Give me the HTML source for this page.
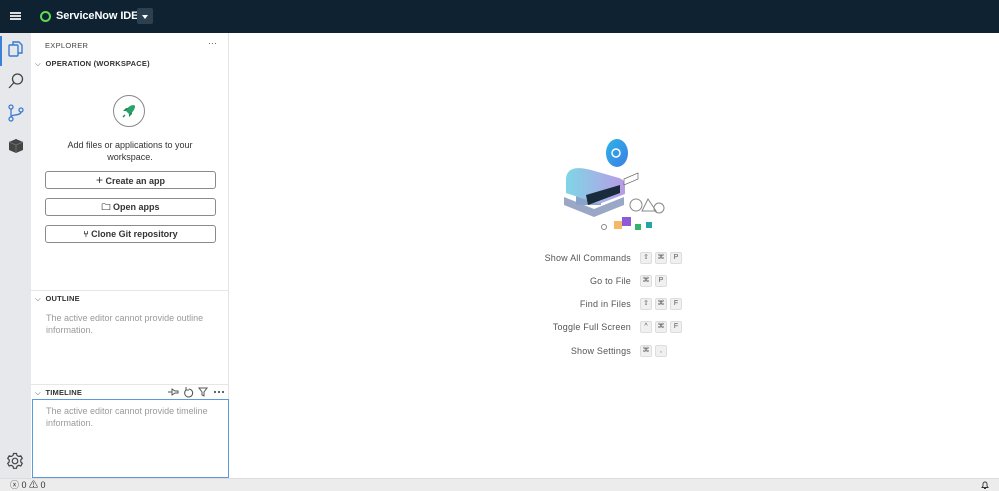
<!DOCTYPE html>
<html><head><meta charset="utf-8"><style>
*{box-sizing:border-box;margin:0;padding:0}
body{width:999px;height:491px;overflow:hidden;font-family:"Liberation Sans",sans-serif;background:#fff;position:relative;color:#333}
.top{position:absolute;left:0;top:0;width:999px;height:33px;background:#0e2232}
.act{position:absolute;left:0;top:33px;width:31px;height:445px;background:#e6e8eb}
.side{position:absolute;left:31px;top:33px;width:198px;height:445px;background:#fff;border-right:1px solid #e3e3e3}
.status{position:absolute;left:0;top:478px;width:999px;height:13px;background:#ececec;border-top:1px solid #ddd;font-size:9px;color:#333}
.abs{position:absolute}
.hdr{font-size:7.5px;font-weight:bold;color:#333;letter-spacing:.2px}
.btn{position:absolute;left:14px;width:171px;height:18px;border:1px solid #8a8a8a;border-radius:3px;font-size:9px;font-weight:bold;color:#333;text-align:center;line-height:16px}
.muted{font-size:9px;color:#9a9a9a;line-height:11.5px}
.row{position:absolute;right:368px;font-size:9px;color:#555;letter-spacing:.2px;white-space:nowrap;width:200px;height:14px}
.row span.t{position:absolute;right:0;top:1px}
.keys{position:absolute;left:640px;white-space:nowrap}
.k{display:inline-block;height:12px;width:12px;background:#f0f0f0;border:1px solid #ddd;border-radius:2px;font-size:7px;line-height:10px;text-align:center;color:#555;margin-right:3px;vertical-align:top}
</style></head><body>
<div class="top">
  <div class="abs" style="left:10px;top:12px;width:11px;height:1.5px;background:#ddd;box-shadow:0 3px 0 #ddd,0 6px 0 #ddd"></div>
  <div class="abs" style="left:40px;top:11px;width:11px;height:11px;border:2.5px solid #62d84e;border-radius:50%"></div>
  <div class="abs" style="left:56px;top:10px;font-size:11px;font-weight:bold;color:#fff;letter-spacing:-.1px">ServiceNow IDE</div>
  <div class="abs" style="left:137px;top:8px;width:16px;height:16px;background:#2d4050;border-radius:2px"></div>
  <div class="abs" style="left:142px;top:15px;width:0;height:0;border-left:3px solid transparent;border-right:3px solid transparent;border-top:4px solid #fff"></div>
</div>
<div class="act">
  <div class="abs" style="left:0;top:3px;width:2px;height:30px;background:#3b82d6"></div>
  <svg class="abs" style="left:7px;top:7px" width="18" height="18" viewBox="0 0 18 18" fill="none" stroke="#3a7bd0" stroke-width="1.4"><rect x="2" y="5" width="9" height="11" rx="1"/><path d="M6 5V2h6l3 3v8h-4"/></svg>
  <svg class="abs" style="left:7px;top:39px" width="18" height="18" viewBox="0 0 18 18" fill="none" stroke="#444" stroke-width="1.3"><circle cx="10.5" cy="7" r="5"/><path d="M7 10.5L2 16"/></svg>
  <svg class="abs" style="left:7px;top:71px" width="18" height="18" viewBox="0 0 18 18" fill="none" stroke="#3a7bd0" stroke-width="1.3"><circle cx="4" cy="3" r="2"/><circle cx="4" cy="15" r="2"/><circle cx="14" cy="6" r="2"/><path d="M4 5v8M14 8c0 4-10 2-10 5"/></svg>
  <svg class="abs" style="left:7px;top:103px" width="18" height="18" viewBox="0 0 18 18"><path d="M2 6l7-3 7 3v8l-7 3-7-3z" fill="#444"/><path d="M2 6l7 3 7-3M9 9v8" stroke="#777" stroke-width=".8" fill="none"/></svg>
  <svg class="abs" style="left:6px;top:419px" width="18" height="18" viewBox="0 0 18 18" fill="none" stroke="#444" stroke-width="1.2"><circle cx="9" cy="9" r="2.8"/><path d="M7.5 1.5h3l.5 2 1.8 1 2-.7 1.5 2.6-1.5 1.4v2.2l1.5 1.4-1.5 2.6-2-.7-1.8 1-.5 2h-3l-.5-2-1.8-1-2 .7-1.5-2.6 1.5-1.4V7.8L1.7 6.4l1.5-2.6 2 .7 1.8-1z"/></svg>
</div>
<div class="side">
  <div class="abs" style="left:14px;top:8px;font-size:7.5px;color:#444;letter-spacing:.3px">EXPLORER</div>
  <div class="abs" style="left:177px;top:5px;font-size:9px;color:#555">···</div>
  <div class="abs hdr" style="left:4px;top:26px"><span style="font-weight:normal;color:#555">⌵</span>&nbsp; OPERATION (WORKSPACE)</div>
  <div class="abs" style="left:82px;top:62px;width:32px;height:32px;border:1px solid #888;border-radius:50%"></div>
  <svg class="abs" style="left:88px;top:68px" width="20" height="20" viewBox="0 0 20 20"><path d="M15 4c-4 0-7 3-8 6l3 3c3-1 6-4 6-8z" fill="#2aa36b"/><path d="M7 10l-3 0 3-3h3zM10 13v3l3-3v-3z" fill="#1f8f5a"/><path d="M6 14l-2 2" stroke="#1f8f5a" stroke-width="1.5"/></svg>
  <div class="abs" style="left:0;width:198px;top:106px;text-align:center;font-size:9px;color:#333;line-height:12px">Add files or applications to your<br>workspace.</div>
  <div class="btn" style="top:138px"><span style="font-weight:normal;font-size:12px">+</span> Create an app</div>
  <div class="btn" style="top:165px">🗀 Open apps</div>
  <div class="btn" style="top:192px">⑂ Clone Git repository</div>
  <div class="abs" style="left:0;top:257px;width:198px;height:1px;background:#e6e6e6"></div>
  <div class="abs hdr" style="left:4px;top:261px"><span style="font-weight:normal;color:#555">⌵</span>&nbsp; OUTLINE</div>
  <div class="abs muted" style="left:15px;top:280px">The active editor cannot provide outline<br>information.</div>
  <div class="abs" style="left:0;top:351px;width:198px;height:1px;background:#e6e6e6"></div>
  <div class="abs hdr" style="left:4px;top:355px"><span style="font-weight:normal;color:#555">⌵</span>&nbsp; TIMELINE</div>
  <svg class="abs" style="left:136px;top:353px" width="60" height="12" viewBox="0 0 60 12" fill="none" stroke="#555" stroke-width="1"><path d="M1 6h4M5 3v6l3-2h3v-2h-3z"/><path d="M22 3a4 4 0 1 1-3 1M19 1v3h3"/><path d="M32 2h8l-3 4v4l-2-1v-3z"/><circle cx="48" cy="6" r=".6" fill="#555"/><circle cx="52" cy="6" r=".6" fill="#555"/><circle cx="56" cy="6" r=".6" fill="#555"/></svg>
  <div class="abs" style="left:1px;top:366px;width:197px;height:79px;border:1px solid #5a9ad8"></div>
  <div class="abs muted" style="left:15px;top:373px">The active editor cannot provide timeline<br>information.</div>
</div>
<svg class="abs" style="left:556px;top:135px" width="112" height="100" viewBox="0 0 112 100">
  <defs><linearGradient id="g" x1="0" x2="1"><stop offset="0" stop-color="#7fd6e6"/><stop offset="1" stop-color="#b99be6"/></linearGradient>
  <linearGradient id="b" x1="0" x2="1" y1="0" y2="1"><stop offset="0" stop-color="#2bb4e8"/><stop offset="1" stop-color="#3d7de4"/></linearGradient></defs>
  <ellipse cx="61" cy="18" rx="11" ry="14" fill="url(#b)"/><circle cx="60" cy="18" r="4" fill="none" stroke="#fff" stroke-width="1.5"/>
  <path d="M8 62l30 12 30-12v8L38 82 8 70z" fill="#9aa7c6"/>
  <rect x="20" y="50" width="25" height="20" fill="#8ba3c8"/>
  <path d="M10 45c0-12 10-14 25-10l28 8c6 2 6 6 6 10v6l-26 10L10 58z" fill="url(#g)"/>
  <path d="M30 60l34-10v8L32 70z" fill="#1a2c3c"/>
  <path d="M68 44l14-6v6l-14 6z" fill="#fff" stroke="#666" stroke-width=".7"/>
  <circle cx="80" cy="70" r="6" fill="none" stroke="#888"/><path d="M92 64l8 12h-14z" fill="none" stroke="#888"/>
  <circle cx="103" cy="73" r="5" fill="none" stroke="#888"/>
  <circle cx="48" cy="92" r="2.5" fill="none" stroke="#888"/>
  <rect x="58" y="86" width="8" height="8" fill="#f4b867"/><rect x="66" y="82" width="9" height="9" fill="#8c5ad8"/>
  <rect x="79" y="89" width="6" height="6" fill="#33b36c"/><rect x="90" y="87" width="6" height="6" fill="#24a5a5"/>
</svg>
<div class="row" style="top:252px"><span class="t">Show All Commands</span></div>
<div class="keys" style="top:252px"><span class="k">⇧</span><span class="k">⌘</span><span class="k">P</span></div>
<div class="row" style="top:275px"><span class="t">Go to File</span></div>
<div class="keys" style="top:275px"><span class="k">⌘</span><span class="k">P</span></div>
<div class="row" style="top:298px"><span class="t">Find in Files</span></div>
<div class="keys" style="top:298px"><span class="k">⇧</span><span class="k">⌘</span><span class="k">F</span></div>
<div class="row" style="top:321px"><span class="t">Toggle Full Screen</span></div>
<div class="keys" style="top:321px"><span class="k">^</span><span class="k">⌘</span><span class="k">F</span></div>
<div class="row" style="top:345px"><span class="t">Show Settings</span></div>
<div class="keys" style="top:345px"><span class="k">⌘</span><span class="k">,</span></div>
<div class="status">
  <div class="abs" style="left:10px;top:0;line-height:12px">ⓧ 0 ⚠ 0</div>
  <svg class="abs" style="left:980px;top:1px" width="10" height="10" viewBox="0 0 10 10" fill="none" stroke="#333" stroke-width=".9"><path d="M2 7.5h6l-1-1.5V4a2 2 0 0 0-4 0v2zM4 8.5h2"/></svg>
</div>
</body></html>
